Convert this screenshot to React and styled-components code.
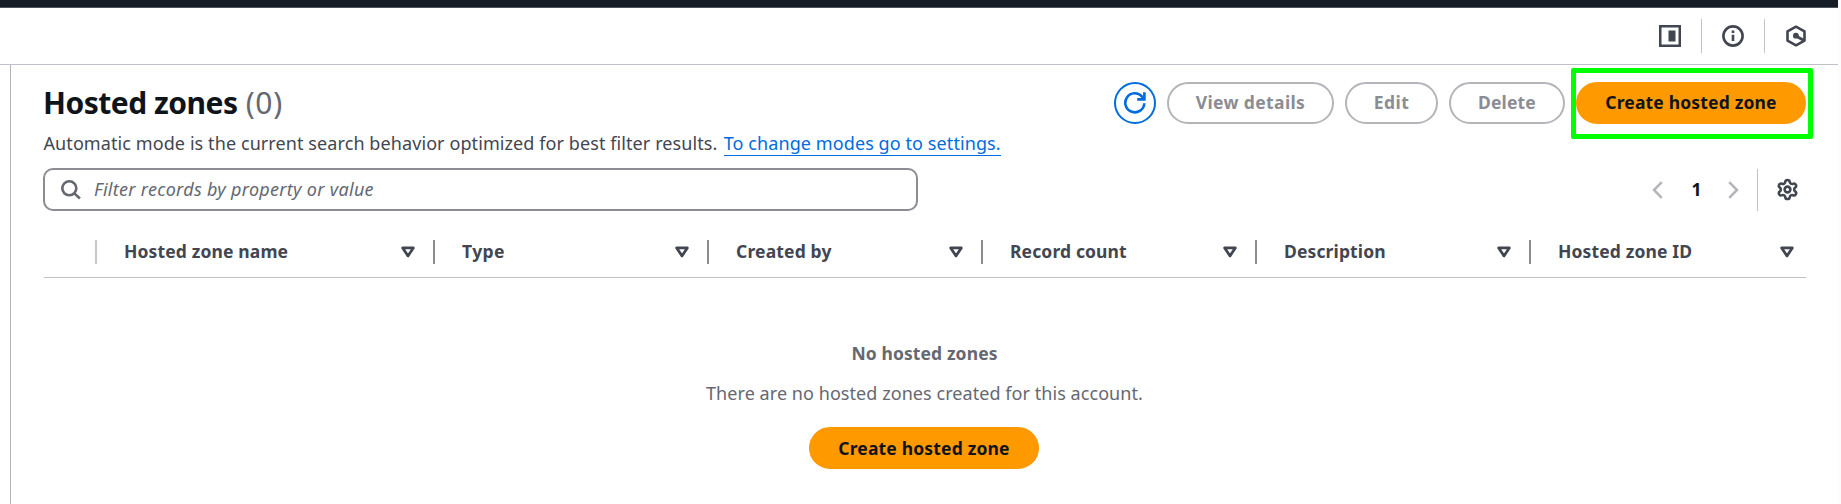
import React from "react";
import styled, { createGlobalStyle } from "styled-components";
import { Settings } from "lucide-react";

const GlobalStyle = createGlobalStyle`
  * { box-sizing: border-box; }
  body {
    margin: 0;
    background: #fcfcfc;
    color: #424650;
    font-family: "Noto Sans", "Open Sans", sans-serif;
    font-size: 17.5px;
    line-height: 25px;
    overflow: hidden;
  }
`;

const Page = styled.div`
  width: 1838px;
  height: 504px;
  display: flex;
  flex-direction: column;
  background: #fff;
`;

const NavStrip = styled.div`
  height: 8px;
  flex: none;
  background: #161d26;
  border-bottom: 1px solid #4d535c;
`;

const Toolbar = styled.header`
  height: 57px;
  flex: none;
  display: flex;
  justify-content: flex-end;
  align-items: center;
  padding: 0 21px 0 0;
  border-bottom: 1px solid #c1c1cb;
`;

const ToolButton = styled.button`
  width: ${(p) => p.$width || 62}px;
  height: 34px;
  padding: ${(p) => p.$pad || "0"};
  border: 0;
  border-right: ${(p) => (p.$last ? "0" : "1px solid #c1c1cb")};
  background: none;
  color: #424650;
  display: flex;
  align-items: center;
  justify-content: ${(p) => (p.$last ? "flex-end" : "flex-start")};
`;

const Main = styled.main`
  flex: 1;
  margin-left: 10px;
  padding: 17px 32px 0 33px;
  border-left: 1px solid #b4b4bb;
`;

const TitleRow = styled.div`
  display: flex;
  align-items: center;
  justify-content: space-between;
  height: 42px;
`;

const Title = styled.h1`
  margin: 0 0 0 -1px;
  font-size: 30px;
  line-height: 36px;
  font-weight: 700;
  letter-spacing: -0.5px;
  color: #0f141a;
`;

const Count = styled.span`
  margin-left: 1px;
  font-weight: 400;
  letter-spacing: 0.6px;
  color: #656871;
`;

const Actions = styled.div`
  display: flex;
  gap: 11px;
`;

const RefreshButton = styled.button`
  width: 42px;
  height: 42px;
  padding: 0;
  display: flex;
  align-items: center;
  justify-content: center;
  border: 2px solid #006ce0;
  border-radius: 50%;
  background: #fff;
  color: #006ce0;
`;

const Button = styled.button`
  width: ${(p) => p.$width}px;
  height: 42px;
  padding: 0 0 ${(p) => p.$lift || 0}px;
  border: 2px solid ${(p) => (p.$primary ? "#ff9900" : "#b4b4bb")};
  border-radius: 21px;
  background: ${(p) => (p.$primary ? "#ff9900" : "#fff")};
  color: ${(p) => (p.$primary ? "#0f141a" : "#8c8c94")};
  font: 700 17.5px/25px "Noto Sans", "Open Sans", sans-serif;
  letter-spacing: ${(p) => p.$track || 0.17}px;
  white-space: nowrap;
`;

const Highlight = styled.div`
  position: relative;
  &::after {
    content: "";
    position: absolute;
    inset: -14px -7px -15px -5px;
    border: 5px solid #00ff00;
    border-radius: 2px;
  }
`;

const Description = styled.p`
  margin: 7px 0 0 -0.5px;
  font-size: 18px;
  letter-spacing: 0.09px;
  white-space: nowrap;
`;

const Link = styled.a`
  display: inline-block;
  height: 25px;
  margin-left: 1.5px;
  border-bottom: 1px solid #006ce0;
  color: #006ce0;
  letter-spacing: 0.09px;
`;

const FilterRow = styled.div`
  margin-top: 12px;
  height: 43px;
  display: flex;
  align-items: center;
  justify-content: space-between;
`;

const SearchBox = styled.div`
  width: 875px;
  height: 43px;
  margin-left: -1px;
  padding-left: 16px;
  display: flex;
  align-items: center;
  gap: 13px;
  border: 2px solid #8c8c94;
  border-radius: 10px;
  color: #656871;
`;

const Placeholder = styled.span`
  font-size: 18px;
  font-style: italic;
  letter-spacing: 0.305px;
`;

const Pager = styled.div`
  display: flex;
  align-items: center;
  height: 43px;
  color: #b4b4bb;
`;

const PageNumber = styled.span`
  width: 65px;
  padding-left: 2px;
  text-align: center;
  font-weight: 700;
  color: #0f141a;
`;

const Preferences = styled.div`
  height: 42px;
  margin-left: 18px;
  padding: 0 7px 0 18px;
  display: flex;
  align-items: center;
  border-left: 1px solid #c1c1cb;
  color: #424650;
`;

const TableHead = styled.div`
  margin-top: 16px;
  height: 51px;
  display: flex;
  align-items: center;
  border-bottom: 1px solid #c1c1cb;
`;

const SelectCell = styled.div`
  width: 53px;
  height: 24px;
  border-right: 2px solid #c6c6cd;
`;

const HeadCell = styled.div`
  width: ${(p) => p.$width}px;
  height: 24px;
  padding: 0 ${(p) => (p.$last ? 12 : 18)}px 0 27px;
  display: flex;
  align-items: center;
  justify-content: space-between;
  border-right: ${(p) => (p.$last ? "0" : "2px solid #8c8c94")};
  font-weight: 700;
  letter-spacing: ${(p) => p.$track || 0.13}px;
  white-space: nowrap;
`;

const HeadLabel = styled.span`
  padding-bottom: 2px;
`;

const Empty = styled.section`
  margin-top: 63px;
  padding-right: 2px;
  display: flex;
  flex-direction: column;
  align-items: center;
  color: #656871;
`;

const EmptyTitle = styled.strong`
  padding-left: 1px;
  letter-spacing: 0.1px;
`;

const EmptyText = styled.p`
  margin: 15px 0 21px;
  padding-left: 1px;
  font-size: 18px;
  letter-spacing: 0.06px;
`;

const PanelIcon = () => (
  <svg width="22" height="22" viewBox="0 0 22 22" fill="none">
    <rect x="1.25" y="1.25" width="19.5" height="19.5" stroke="currentColor" strokeWidth="2.5" />
    <rect x="9.5" y="5.5" width="7" height="11" fill="currentColor" />
  </svg>
);

const InfoIcon = () => (
  <svg width="22" height="22" viewBox="0 0 22 22" fill="none">
    <circle cx="11" cy="11" r="9.6" stroke="currentColor" strokeWidth="2.6" />
    <path d="M11 9.8v6.2M11 5.6v2.5" stroke="currentColor" strokeWidth="2.6" />
  </svg>
);

const HexIcon = () => (
  <svg width="20" height="22" viewBox="0 0 20 22" fill="none" stroke="currentColor">
    <path d="M10 1.7l8.5 4.7v9.2L10 20.3l-8.5-4.7V6.4z" strokeWidth="2.6" strokeLinejoin="round" />
    <path d="M10 11l8 4.4" strokeWidth="2.8" />
    <circle cx="9.9" cy="10.7" r="2.9" fill="currentColor" stroke="none" />
  </svg>
);

const RefreshIcon = () => (
  <svg width="24" height="24" viewBox="0 0 24 24" fill="none" stroke="currentColor" strokeWidth="2.6">
    <path d="M21.3 12.2a9.5 9.5 0 1 1-2.2-6.5l1.6 2.1" />
    <path d="M21.4 1.2v7.2h-7.2" />
  </svg>
);

const SearchIcon = () => (
  <svg width="20" height="20" viewBox="0 0 20 20" fill="none" stroke="currentColor" strokeWidth="2.6">
    <circle cx="8.3" cy="8.3" r="7" />
    <path d="M13.1 13.1l5.8 5.4" />
  </svg>
);

const Chevron = ({ d }) => (
  <svg width="11" height="18" viewBox="0 0 11 18" fill="none" stroke="currentColor" strokeWidth="2.5">
    <path d={d} />
  </svg>
);

const SortIcon = () => (
  <svg width="14" height="12" viewBox="0 0 14 12" fill="none">
    <path d="M1.7 1.9h10.6L7 9.9z" stroke="currentColor" strokeWidth="2.8" strokeLinejoin="round" />
  </svg>
);

const columns = [
  { label: "Hosted zone name", width: 338 },
  { label: "Type", width: 274, track: 0.4 },
  { label: "Created by", width: 274, track: 0.16 },
  { label: "Record count", width: 274 },
  { label: "Description", width: 274 },
  { label: "Hosted zone ID", width: 275, last: true },
];

export default function App() {
  return (
    <>
      <GlobalStyle />
      <Page>
        <NavStrip />
        <Toolbar>
          <ToolButton $width={43}>
            <PanelIcon />
          </ToolButton>
          <ToolButton $width={63} $pad="0 0 0 20px">
            <InfoIcon />
          </ToolButton>
          <ToolButton $width={52} $pad="0 11px 0 0" $last>
            <HexIcon />
          </ToolButton>
        </Toolbar>
        <Main>
          <TitleRow>
            <Title>
              Hosted zones <Count>(0)</Count>
            </Title>
            <Actions>
              <RefreshButton aria-label="Refresh">
                <RefreshIcon />
              </RefreshButton>
              <Button $width={167} $track={0.37} $lift={2}>View details</Button>
              <Button $width={93} $track={0.45} $lift={2}>Edit</Button>
              <Button $width={116} $lift={2}>Delete</Button>
              <Highlight>
                <Button $primary $width={230} $lift={2}>Create hosted zone</Button>
              </Highlight>
            </Actions>
          </TitleRow>
          <Description>
            Automatic mode is the current search behavior optimized for best filter results.{" "}
            <Link>To change modes go to settings.</Link>
          </Description>
          <FilterRow>
            <SearchBox>
              <SearchIcon />
              <Placeholder>Filter records by property or value</Placeholder>
            </SearchBox>
            <Pager>
              <Chevron d="M9.8 1.2L2 9l7.8 7.8" />
              <PageNumber>1</PageNumber>
              <Chevron d="M1.2 1.2L9 9l-7.8 7.8" />
              <Preferences>
                <Settings size={23} strokeWidth={2.7} />
              </Preferences>
            </Pager>
          </FilterRow>
          <TableHead>
            <SelectCell />
            {columns.map((c) => (
              <HeadCell key={c.label} $width={c.width} $track={c.track} $last={c.last}>
                <HeadLabel>{c.label}</HeadLabel>
                <SortIcon />
              </HeadCell>
            ))}
          </TableHead>
          <Empty>
            <EmptyTitle>No hosted zones</EmptyTitle>
            <EmptyText>There are no hosted zones created for this account.</EmptyText>
            <Button $primary $width={230}>Create hosted zone</Button>
          </Empty>
        </Main>
      </Page>
    </>
  );
}
